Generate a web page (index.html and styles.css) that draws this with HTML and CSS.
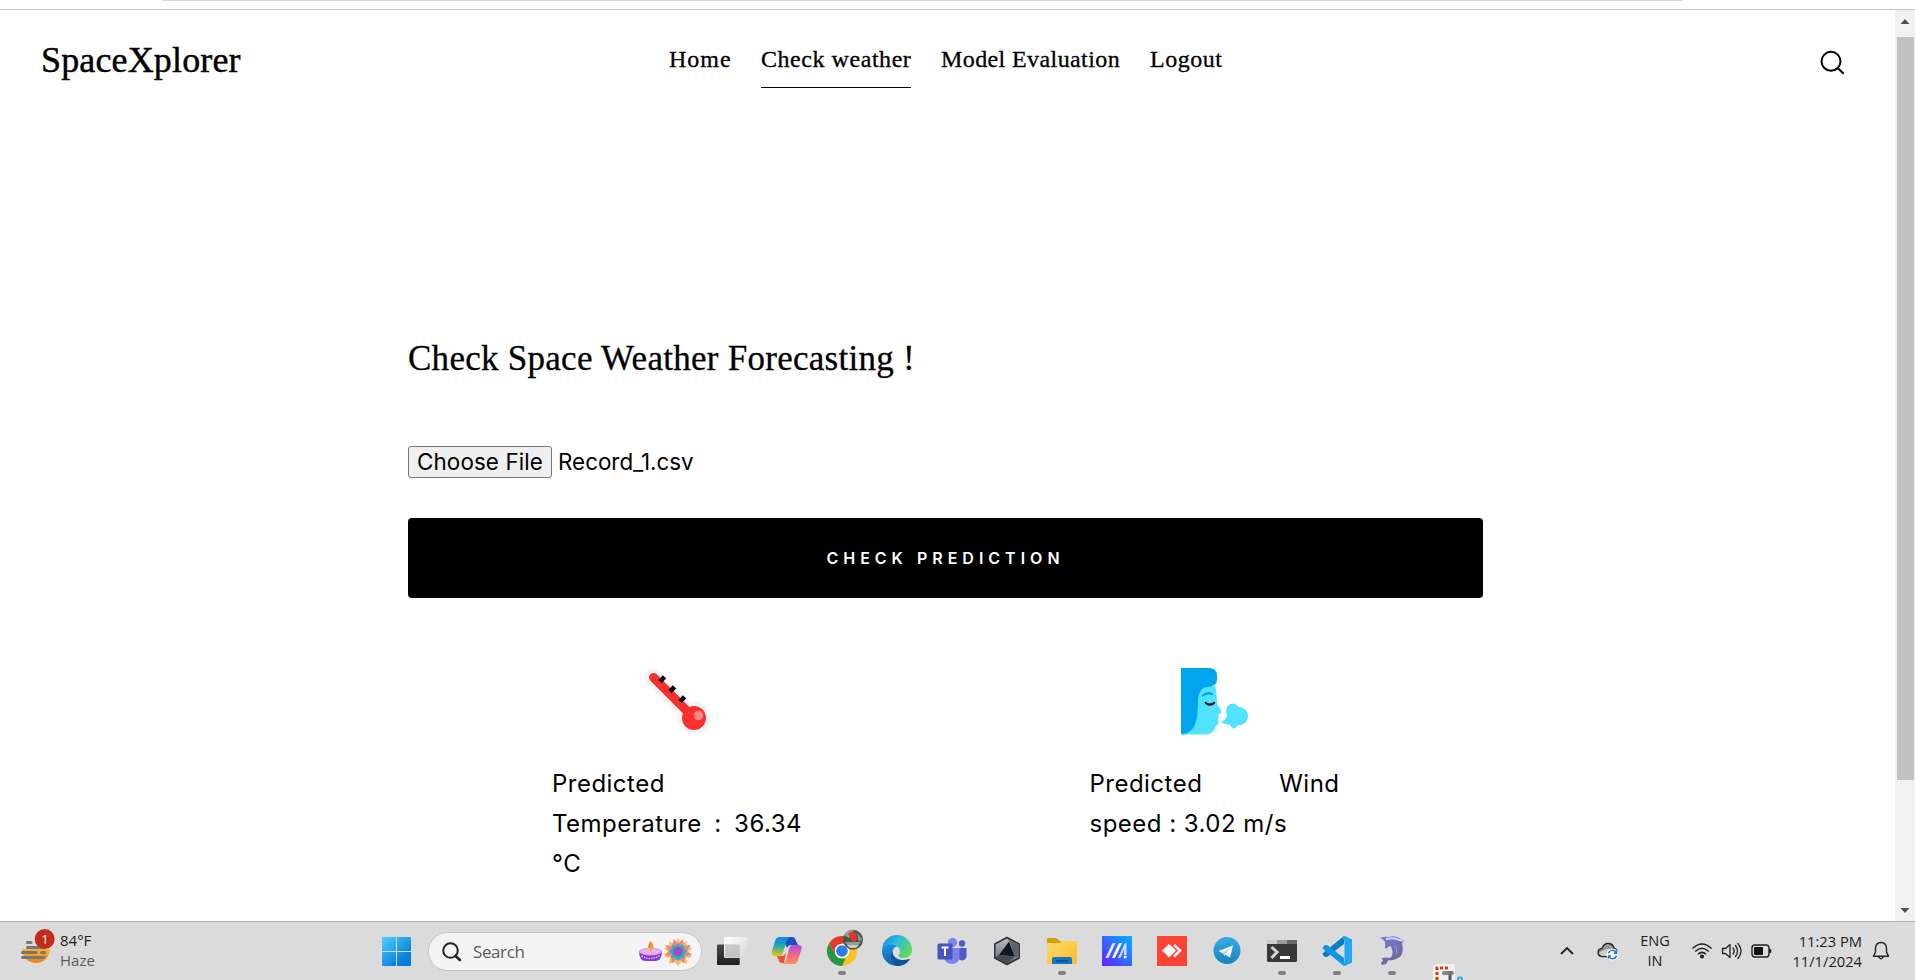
FILE: index.html
```html
<!DOCTYPE html>
<html lang="en">
<head>
<meta charset="utf-8">
<title>SpaceXplorer</title>
<link rel="stylesheet" href="styles.css">
</head>
<body>
<div class="chrome-edge"><div class="chrome-line"></div></div>
<div class="viewport">
  <div class="page">
    <header class="header">
      <a class="logo">SpaceXplorer</a>
      <nav class="nav">
        <a class="nav-home">Home</a>
        <a class="nav-check active">Check weather</a>
        <a class="nav-model">Model Evaluation</a>
        <a class="nav-logout">Logout</a>
      </nav>
      <svg class="search-icon" width="26" height="26" viewBox="0 0 26 26" fill="none" stroke="#000" stroke-width="2"><circle cx="12" cy="12.300" r="9.500"/><path d="M18.700 19 24.700 24.800"/></svg>
    </header>
    <main class="main">
      <h1 class="title">Check Space Weather Forecasting !</h1>
      <div class="file-row"><span class="file-btn">Choose File</span><span class="file-name">Record_1.csv</span></div>
      <div class="submit">CHECK PREDICTION</div>
      <div class="results">
        <section class="result">
          <svg class="emoji" width="67" height="67" viewBox="0 0 67 67">
            <path d="M9 9 49 49" stroke="#f4f4f4" stroke-width="18" stroke-linecap="round"/><circle cx="50" cy="50" r="16.500" fill="#f4f4f4"/>
            <path d="M9.500 9.500 46 46" stroke="#f8312f" stroke-width="9" stroke-linecap="round"/><circle cx="50" cy="50" r="12" fill="#f8312f"/><circle cx="54.500" cy="47.500" r="4.800" fill="#ff8687"/>
            <path d="M16 13.500 20.500 8.800M26 23.500 30.500 18.800M36 33.500 40.500 28.800" stroke="#000" stroke-width="4.600"/>
          </svg>
          <p class="reading"><span class="line">Predicted</span><span class="line spread">Temperature : 36.34</span><span class="line">°C</span></p>
        </section>
        <section class="result">
          <svg class="emoji wind" width="67" height="67" viewBox="0 0 67 67">
            <path d="M14 18H34Q36 25 36 36C38 39 41 42 40 44Q40 46 37 46.500L38 50 36.500 52 38 54.500 35 58Q32 66 26 66.500H1Z" fill="#50e2ff"/>
            <path d="M0 0H28Q36 0 36 8V12Q36 19 25 19Q17.500 21 17 32C17 51 15 65 0 66.500Z" fill="#00a6ed"/>
            <path d="M22 27.500Q26 24 31 26" stroke="#00a6ed" stroke-width="2.300" fill="none" stroke-linecap="round"/>
            <path d="M24.800 35Q29 38.300 33 35" stroke="#000" stroke-width="2.200" fill="none" stroke-linecap="round"/>
            <path d="M40 54Q44 52 46.500 48C43 43 46 35.500 52 35.500Q56 36 57.500 39C63 39 67 42.500 67 48C67 54 62 57.500 56.500 57.500Q55 60.500 52.500 60.500Q50 60 49 56.700Q44 57 40 54Z" fill="#50e2ff"/>
          </svg>
          <p class="reading"><span class="line spread">Predicted Wind</span><span class="line speed">speed : 3.02 m/s</span></p>
        </section>
      </div>
    </main>
  </div>
  <div class="scrollbar">
    <svg width="20" height="27" viewBox="0 0 20 27"><path d="M5.500 14 10 9 14.500 14Z" fill="#505050"/></svg>
    <div class="thumb"></div>
    <svg class="down" width="20" height="20" viewBox="0 0 20 20"><path d="M5.500 7 10 12 14.500 7Z" fill="#505050"/></svg>
  </div>
</div>
<footer class="taskbar">
  <div class="weather">
    <svg width="36" height="58" viewBox="0 -10 36 58">
      <defs><linearGradient id="sun" x2="0" y2="1"><stop stop-color="#f8b526"/><stop offset="1" stop-color="#f4801b"/></linearGradient></defs>
      <path d="M2 17H30A14 14 0 0 1 2 17Z" fill="url(#sun)"/>
      <path d="M7.500 10.500H11M7.500 15.500H24M2.500 20.500H16M21.500 20.500H24.500M2.500 25.500H24" stroke="#777" stroke-width="3" stroke-linecap="round"/>
      <circle cx="24.700" cy="7" r="10" fill="#c42b1c"/>
    </svg>
    <span class="badge">1</span>
    <div class="weather-text"><span class="temp">84°F</span><span class="cond">Haze</span></div>
  </div>
  <svg class="start" width="30" height="30" viewBox="0 0 30 30">
    <defs><linearGradient id="win" gradientUnits="userSpaceOnUse" x1="0" y1="0" x2="26" y2="30"><stop stop-color="#4fd2ff"/><stop offset=".75" stop-color="#0a80db"/><stop offset="1" stop-color="#0878d4"/></linearGradient></defs>
    <path d="M0 1Q0 0 1 0H14V14H0ZM15 0H28Q29 0 29 1V14H15ZM0 15H14V29H1Q0 29 0 28ZM15 15H29V28Q29 29 28 29H15Z" fill="url(#win)"/>
  </svg>
  <div class="task-search">
    <svg width="20" height="20" viewBox="0 0 20 20" fill="none" stroke="#222" stroke-width="2"><circle cx="8.500" cy="8.500" r="7.300"/><path d="M13.500 14 18 18" stroke-width="2.600" stroke-linecap="round"/></svg>
    <span class="search-text">Search</span>
    <svg class="festive" width="54" height="30" viewBox="0 0 54 30">
      <path d="M12.500 4Q17.500 10 14 14H11Q8 11 12.500 4Z" fill="#ef8c1c"/>
      <path d="M1 14Q1 24 8 24H17Q24 24 24 14Z" fill="#8338c9"/><ellipse cx="12.500" cy="14.500" rx="11.500" ry="4" fill="#d9a3f3"/><ellipse cx="12.500" cy="14.500" rx="9" ry="2.500" fill="#efb3d9"/>
      <path d="M12.500 7Q15 11 12.500 14.500Q10.500 11 12.500 7Z" fill="#f19a22"/><path d="M3.500 19Q12 24 21.500 19" stroke="#dcb5f6" stroke-width="1.500" stroke-dasharray="1.500 1" fill="none"/>
      <path d="m40 1 3 6 6-3-1 6 6 1-4 4 4 5-6 1 1 6-6-2-3 4-3-4-6 2 1-6-6-1 4-5-4-4 6-1-1-6 6 3Z" fill="#f5c253"/>
      <path d="m36 2 4 5 5-5 1 7 7-1-4 6 5 4-7 1-1 7-6-5-6 5-1-7-7-1 5-4-4-6 7 1Z" fill="#f17f91"/>
      <path d="m40 6 2 3 4-1 0 4 3 2-3 3 1 4-4 0-3 3-3-3-4 0 1-4-3-3 3-2 0-4 4 1Z" fill="#21b7bc"/><circle cx="40" cy="14.500" r="4.800" fill="#a14bc6"/>
    </svg>
  </div>
  <div class="apps">
    <svg width="55" height="58" viewBox="0 0 55 58"><defs><linearGradient id="dk" x2="0" y2="1"><stop stop-color="#4a4b49"/><stop offset="1" stop-color="#20211f"/></linearGradient><linearGradient id="lt" x2="1" y2="1"><stop stop-color="#fff"/><stop offset="1" stop-color="#d6d6d6"/></linearGradient></defs><rect x="13" y="22.500" width="22.700" height="20.500" rx="1" fill="url(#dk)"/><rect x="20" y="15" width="23" height="21" rx="1.500" fill="url(#lt)"/><path d="M21 22.500H35.700V35.500H21Z" fill="#b9b9b7" opacity=".75"/></svg>
    <svg width="55" height="58" viewBox="0 0 55 58"><defs><linearGradient id="co1" x2="0" y2="1"><stop stop-color="#1687e8"/><stop offset=".35" stop-color="#159dc4"/><stop offset=".65" stop-color="#5db96d"/><stop offset="1" stop-color="#f5c31a"/></linearGradient><linearGradient id="co2" x2="0" y2="1"><stop stop-color="#a750e5"/><stop offset=".5" stop-color="#f2628c"/><stop offset="1" stop-color="#ff9457"/></linearGradient></defs>
      <path d="M23 15H33Q36 15 37 19L39 23H32Q29 23 28 26Z" fill="#1a50c5"/><path d="M18 34H24L27 31 25 41H23Q20 41 19.500 38Z" fill="#ee5432"/>
      <path d="M21 15H32Q28 16 27 21L24 31Q23 34 20 34H16Q12 34 13 29L16 19Q17 15 21 15Z" fill="url(#co1)"/><path d="M34 23H39Q43.500 23 42.500 27L39 38Q38 42 34 42H22Q26 42 27.500 37L30 27Q31 23 34 23Z" fill="url(#co2)"/></svg>
    <svg width="55" height="58" viewBox="0 0 55 58"><circle cx="28" cy="29" r="15" fill="#f9c41c"/><path d="M28 29 15 21.500A15 15 0 0 1 41 21.500H28Z" fill="#e33b2e"/><path d="M15 21.500 21.500 32.500 28 29V21.500Z" fill="#e33b2e"/><path d="M15 21.500 21.500 32.500Q24 37 28 36.500H31.500L28 44A15 15 0 0 1 15 21.500Z" fill="#279747"/><circle cx="28" cy="29" r="7.300" fill="#fff"/><circle cx="28" cy="29" r="5.800" fill="#2f7be9"/><circle cx="39" cy="17.700" r="10" fill="#4b5752"/><path d="M30 13Q34 7 40 8L35 16ZM43 11 48 17 45 20ZM31 20H47L44 23H33Z" fill="#8fa09a"/><path d="M34 12 38 9 42 12 43 18 39 21 37 17Z" fill="#e4352c"/><path d="M33 23H45L42 26H36Z" fill="#c3cac6"/><rect x="24" y="49" width="8" height="4" rx="2" fill="#808080"/></svg>
    <svg width="55" height="58" viewBox="0 0 55 58"><defs><linearGradient id="ed1" x2="1" y2=".6"><stop stop-color="#1687d5"/><stop offset=".5" stop-color="#2ebde0"/><stop offset="1" stop-color="#63d957"/></linearGradient><linearGradient id="ed2" x2="0" y2="1"><stop stop-color="#1b93d9"/><stop offset="1" stop-color="#0c61ad"/></linearGradient></defs><path d="M13 28A15 15 0 0 1 43 28C43 34 38 36 34 36C30 36 29 34 30 32.500C32 30 31 25 27 24Q18 22 13 30Z" fill="url(#ed1)"/><path d="M13 29C15 22 23 21 28 24.500Q24 25 23.500 30C23.500 35 29 40 39 38Q35 44 28 44A15 15 0 0 1 13 29Z" fill="url(#ed2)"/><path d="M23.500 29C23 35 29 40 40 37Q42 36.500 40 38.500C36 44 29 45 25 42Q19 37 23.500 29Z" fill="#10549c"/></svg>
    <svg width="55" height="58" viewBox="0 0 55 58"><circle cx="28.500" cy="20.500" r="4.600" fill="#7b83eb"/><circle cx="38" cy="21.500" r="3.200" fill="#5059c9"/><path d="M34 26H42.500V34Q42 38 38 38.500Q34 38 34 34Z" fill="#5059c9"/><path d="M21 26H35.500V35Q35 42 28 42Q21 42 20 35Z" fill="#7b83eb"/><rect x="13.500" y="21.500" width="15" height="16" rx="1.500" fill="#4b53bc"/><path d="M17.500 25.500H24.500M21 25.500V34" stroke="#fff" stroke-width="2"/></svg>
    <svg width="55" height="58" viewBox="0 0 55 58"><defs><linearGradient id="ar" x2="0" y2="1"><stop stop-color="#b8bec4"/><stop offset="1" stop-color="#5d646c"/></linearGradient></defs><path d="M28 14.500 41 21.500V36.500L28 43.500 15 36.500V21.500Z" fill="#2f343b"/><path d="M28 16.500 39.500 22.500V35.500L28 41.500 16.500 35.500V22.500Z" fill="url(#ar)"/><path d="M28 16.500 39.500 22.500V35.500L35 34 31 20Z" fill="#5c626a"/><path d="M30 19.500 35.500 34.500 20 33Z" fill="#14181e"/><path d="M16.500 35.500 20 33 35.500 34.500 28 41.500Z" fill="#454b53"/></svg>
    <svg width="55" height="58" viewBox="0 0 55 58"><defs><linearGradient id="fo" x2="1" y2="1"><stop stop-color="#ffd967"/><stop offset="1" stop-color="#f8bd2d"/></linearGradient></defs><path d="M13 17Q13 16 14 16H22L26 19H42V25H13Z" fill="#d89b09"/><path d="M13 21H25L28 19H42Q43 19 43 20V42H13Z" fill="url(#fo)"/><path d="M18 42V37Q18 35 20 35H36Q38 35 38 37V42Z" fill="#1475c5"/><path d="M22 39H34" stroke="#0c4b88" stroke-width="1.500"/><rect x="24" y="49" width="8" height="4" rx="2" fill="#808080"/></svg>
    <svg width="55" height="58" viewBox="0 0 55 58"><defs><linearGradient id="as" x1="0" y1="1" x2="1" y2="0"><stop stop-color="#6621ff"/><stop offset=".5" stop-color="#3568ff"/><stop offset="1" stop-color="#05b1ff"/></linearGradient></defs><rect x="13" y="14" width="30" height="30" fill="url(#as)"/><path d="M16.500 36 23 22Q23.500 21 25 21H26.500L20 35Q19.500 36 18 36Z" fill="#e6e4ff"/><path d="M23 36 29.500 22Q30 21 31.500 21H33L26.500 35Q26 36 24.500 36Z" fill="#fff"/><path d="M29 36 35.500 22Q36 21 37.500 21V33H35V27.500L32 35Q31.500 36 30 36Z" fill="#cfdcff"/><circle cx="36.200" cy="35" r="1.500" fill="#fff"/></svg>
    <svg width="55" height="58" viewBox="0 0 55 58"><rect x="13" y="14" width="30" height="30" fill="#fc4336"/><path d="m25 22 7 6.500L25 35.500 18 28.500Z" fill="#fff"/><path d="m30 23 6 5.500-6 6" fill="none" stroke="#fff" stroke-width="2.500"/></svg>
    <svg width="55" height="58" viewBox="0 0 55 58"><defs><linearGradient id="tg" x2="0" y2="1"><stop stop-color="#35aee2"/><stop offset="1" stop-color="#1685bd"/></linearGradient></defs><circle cx="28" cy="28.500" r="13.500" fill="url(#tg)"/><path d="M19.500 29 34 23.500 31 35.500 26 32.500Z" fill="#fff"/><path d="M24 30.500 32 25.500 26 32 25.500 35Z" fill="#a9d4eb"/></svg>
    <svg width="55" height="58" viewBox="0 0 55 58"><rect x="13" y="18" width="30" height="22" rx="1.500" fill="#383838"/><path d="M13 22V19Q13 18 14 18H23V22Z" fill="#ccc"/><path d="M23 18H33V22H23Z" fill="#999"/><path d="M33 18H42Q43 18 43 19V22H33Z" fill="#666"/><path d="m17.500 25 5.500 5-5.500 6" stroke="#d4d4d4" stroke-width="3" fill="none"/><path d="M26 35.500H36" stroke="#fff" stroke-width="3"/><rect x="24" y="49" width="8" height="4" rx="2" fill="#808080"/></svg>
    <svg width="55" height="58" viewBox="0 0 55 58"><path d="M35 14V22L18 35 16 35 14 33Q13 32 14 31Z" fill="#087cc5"/><path d="M16 23H18L35 36V44L14 27Q13 26 14 25Z" fill="#1394df"/><path d="M35 14Q36 13.500 37 14.500L43 17.500V40.500L36 44 34 43 35.500 39V19L33 15.500Z" fill="#24a5f3"/><rect x="24" y="49" width="8" height="4" rx="2" fill="#808080"/></svg>
    <svg width="55" height="58" viewBox="0 0 55 58"><defs><linearGradient id="dol" x2=".6" y2="1"><stop stop-color="#7d83cf"/><stop offset=".5" stop-color="#6c6fb9"/><stop offset="1" stop-color="#746994"/></linearGradient></defs><path d="M16 16Q20 14 25 15Q32 13 37 17L40.500 18.500 38 21Q41 34 32 37Q28 39 24.500 38L22 42 18 43 17 41 19 38.500 17.500 36Q22 35 26 36Q29 34 28.500 29Q28 26 26 23.500Q24 26 21 26.500Q21.500 23 21 20Q19 17 16 16Z" fill="url(#dol)"/><path d="M22 17Q31 15 35 18L39.500 18.500" stroke="#d3d8f6" stroke-width="2" fill="none"/><path d="M29 22Q36 27 31 34Q34 27 29 22Z" fill="#a9a3d4"/><rect x="24" y="49" width="8" height="4" rx="2" fill="#808080"/></svg>
    <svg width="55" height="58" viewBox="0 0 55 58"><rect x="14" y="42" width="22" height="20" rx="2" fill="#edf1f3"/><path d="M18 58V46H30" stroke="#d83b01" stroke-width="3" stroke-dasharray="3 2" fill="none"/><path d="M31 49V58" stroke="#555" stroke-width="3"/><rect x="23" y="49" width="12" height="4" rx="2" fill="#777" opacity=".9"/><circle cx="41" cy="57.500" r="2.200" stroke="#24a5df" stroke-width="1.700" fill="none"/></svg>
  </div>
  <div class="tray">
    <svg class="chev" width="16" height="10" viewBox="0 0 16 10" fill="none" stroke="#222" stroke-width="1.800"><path d="m2 8 6-6 6 6"/></svg>
    <svg class="cloud" width="22" height="20" viewBox="0 0 22 20"><path d="M5 15.500Q1 15 1 11.500Q1 8 5 7.500Q7 2 12 2.500Q16 3 17 7Q20 8 20 11V15.500Z" fill="#999" stroke="#222" stroke-width="1.300"/><path d="M2 12Q10 7 13 8L11 15H5Z" fill="#ccc"/><circle cx="15.500" cy="13.500" r="6" fill="#fff"/><path d="M11.500 12.500A4 4 0 0 1 19 11.500M19.500 14.500A4 4 0 0 1 12 15.500M19.500 9.500V12.300H17M11.500 17.500V15H14" stroke="#1675c7" stroke-width="1.400" fill="none"/></svg>
    <div class="lang"><span>ENG</span><span>IN</span></div>
    <svg class="wifi" width="22" height="18" viewBox="0 0 22 18" fill="none" stroke="#222" stroke-width="1.500"><path d="M1.500 6.500Q11-2.500 20.500 6.500M4.200 9.500Q11 3 17.800 9.500M7 12.200Q11 8.500 15 12.200"/><circle cx="11" cy="14.500" r="1.300" fill="#222"/></svg>
    <svg class="speaker" width="22" height="18" viewBox="0 0 22 18" fill="none" stroke="#222" stroke-width="1.300"><path d="M1.500 6.500H4.500L9 2.500V15.500L4.500 11.500H1.500ZM12 6Q14.500 9 12 12M14.500 3.500Q18.500 9 14.500 14.500M17 1.500Q23 9 17 16.500" stroke-linejoin="round" stroke-linecap="round"/></svg>
    <svg class="battery" width="22" height="14" viewBox="0 0 22 14"><rect x="1" y="1" width="17" height="12" rx="3" fill="none" stroke="#222" stroke-width="1.400"/><rect x="3" y="3" width="9" height="8" rx="1" fill="#111"/><path d="M18 5H20Q21 7 20 9H18Z" fill="#222"/></svg>
    <div class="clock"><span class="time">11:23 PM</span><span class="date">11/1/2024</span></div>
    <svg class="bell" width="18" height="20" viewBox="0 0 18 20" fill="none" stroke="#222" stroke-width="1.400"><path d="M1.500 15.300 3.500 11V7Q4 1.500 9 1.500Q14 1.500 14.500 7V11L16.500 15.300ZM6.500 15.500Q9 20 11.500 15.500" stroke-linejoin="round"/></svg>
  </div>
</footer>
</body>
</html>
```
FILE: styles.css
```css
* { box-sizing: border-box; }
body { margin: 0; width: 1915px; height: 980px; overflow: hidden; display: flex; flex-direction: column; background: #fff; color: #000; font-family: Inter, sans-serif; }
svg { display: block; flex: none; }
.chrome-edge { height: 10px; border-bottom: 1px solid #c8c8c8; flex: none; }
.chrome-line { height: 1px; background: #d5d5d5; margin: 0 233px 0 162px; }
.viewport { display: flex; height: 911px; flex: none; }
.page { width: 1895px; }

.header { display: flex; align-items: flex-start; height: 90px; padding-left: 41px; font-family: "Liberation Serif", serif; white-space: nowrap; }
.logo { width: 628px; margin-top: 30px; font-size: 36px; line-height: 41px; letter-spacing: .15px; -webkit-text-stroke: .45px #000; }
.nav { display: flex; gap: 30px; margin-top: 35px; font-size: 24px; line-height: 28px; -webkit-text-stroke: .3px #000; }
.nav a { height: 43px; }
.nav-home { width: 62px; letter-spacing: 1px; }
.nav-check { width: 150px; letter-spacing: .55px; }
.nav-model { width: 179px; letter-spacing: .4px; }
.nav-logout { width: 73px; letter-spacing: .5px; }
.active { border-bottom: 1px solid #000; }
.search-icon { margin: 39px 0 0 596px; }

.main { width: 1075px; margin: 239px 0 0 408px; }
.title { margin: 0; font: 400 35px/40px "Liberation Serif", serif; letter-spacing: .27px; -webkit-text-stroke: .3px #000; white-space: nowrap; }
.file-row { display: flex; align-items: center; gap: 6px; height: 32px; margin-top: 67px; font-size: 22.4px; white-space: nowrap; }
.file-btn { width: 144px; height: 32px; line-height: 30px; text-align: center; letter-spacing: .1px; border: 1px solid #767676; border-radius: 3px; background: #efefef; }
.file-name { line-height: 30px; padding-bottom: 1px; }
.submit { height: 80px; margin-top: 40px; border-radius: 4px; background: #000; color: #fff; font-size: 16px; font-weight: 600; line-height: 80px; letter-spacing: 5px; text-align: center; }
.results { display: grid; grid-template-columns: 1fr 1fr; margin-top: 70px; }
.result { padding-left: 144px; }
.emoji { margin-left: 92px; }
.wind { margin-left: 91px; }
.reading { width: 250px; margin: 29px 0 0; font-size: 24px; line-height: 40px; letter-spacing: .48px; }
.line { display: block; white-space: nowrap; }
.spread { text-align-last: justify; white-space: normal; }

.scrollbar { width: 20px; display: flex; flex-direction: column; background: #f1f1f1; }
.thumb { width: 17px; height: 743px; margin-left: 2px; background: #c1c1c1; }
.down { margin-top: auto; }

.taskbar { display: flex; align-items: flex-start; height: 59px; border-top: 1px solid #b2b2b2; background: #dbdbdb; font: 15px/20px "Open Sans", sans-serif; color: #1c1c1c; white-space: nowrap; }
.weather { position: relative; display: flex; width: 382px; padding-left: 20px; }
.weather-text { display: flex; flex-direction: column; margin: 8px 0 0 4px; }
.badge { position: absolute; left: 35px; top: 7px; width: 20px; color: #fff; text-align: center; font-size: 13px; line-height: 20px; }
.cond { color: #5c5c5c; }
.start { margin-top: 15px; }
.task-search { display: flex; align-items: center; width: 274px; height: 39px; margin: 10px 2px 0 16px; padding: 0 9px 0 13px; border: 1px solid #c6c6c6; border-radius: 20px; background: #f4f4f4; }
.search-text { margin-left: 11px; font-size: 17px; letter-spacing: -.4px; color: #5b5b5b; }
.festive { margin-left: auto; }
.apps { display: flex; width: 770px; }
.tray { display: flex; align-items: center; height: 58px; margin-left: 85px; }
.cloud { margin-left: 22px; }
.lang { display: flex; flex-direction: column; width: 32px; margin-left: 20px; padding-bottom: 1px; text-align: center; font-size: 14.500px; }
.wifi { margin-left: 20px; }
.speaker { margin-left: 8px; }
.battery { margin-left: 8px; }
.clock { display: flex; flex-direction: column; width: 73px; margin-left: 16px; padding-bottom: 1px; font-size: 14.700px; align-items: flex-end; }
.bell { margin-left: 10px; }
```
